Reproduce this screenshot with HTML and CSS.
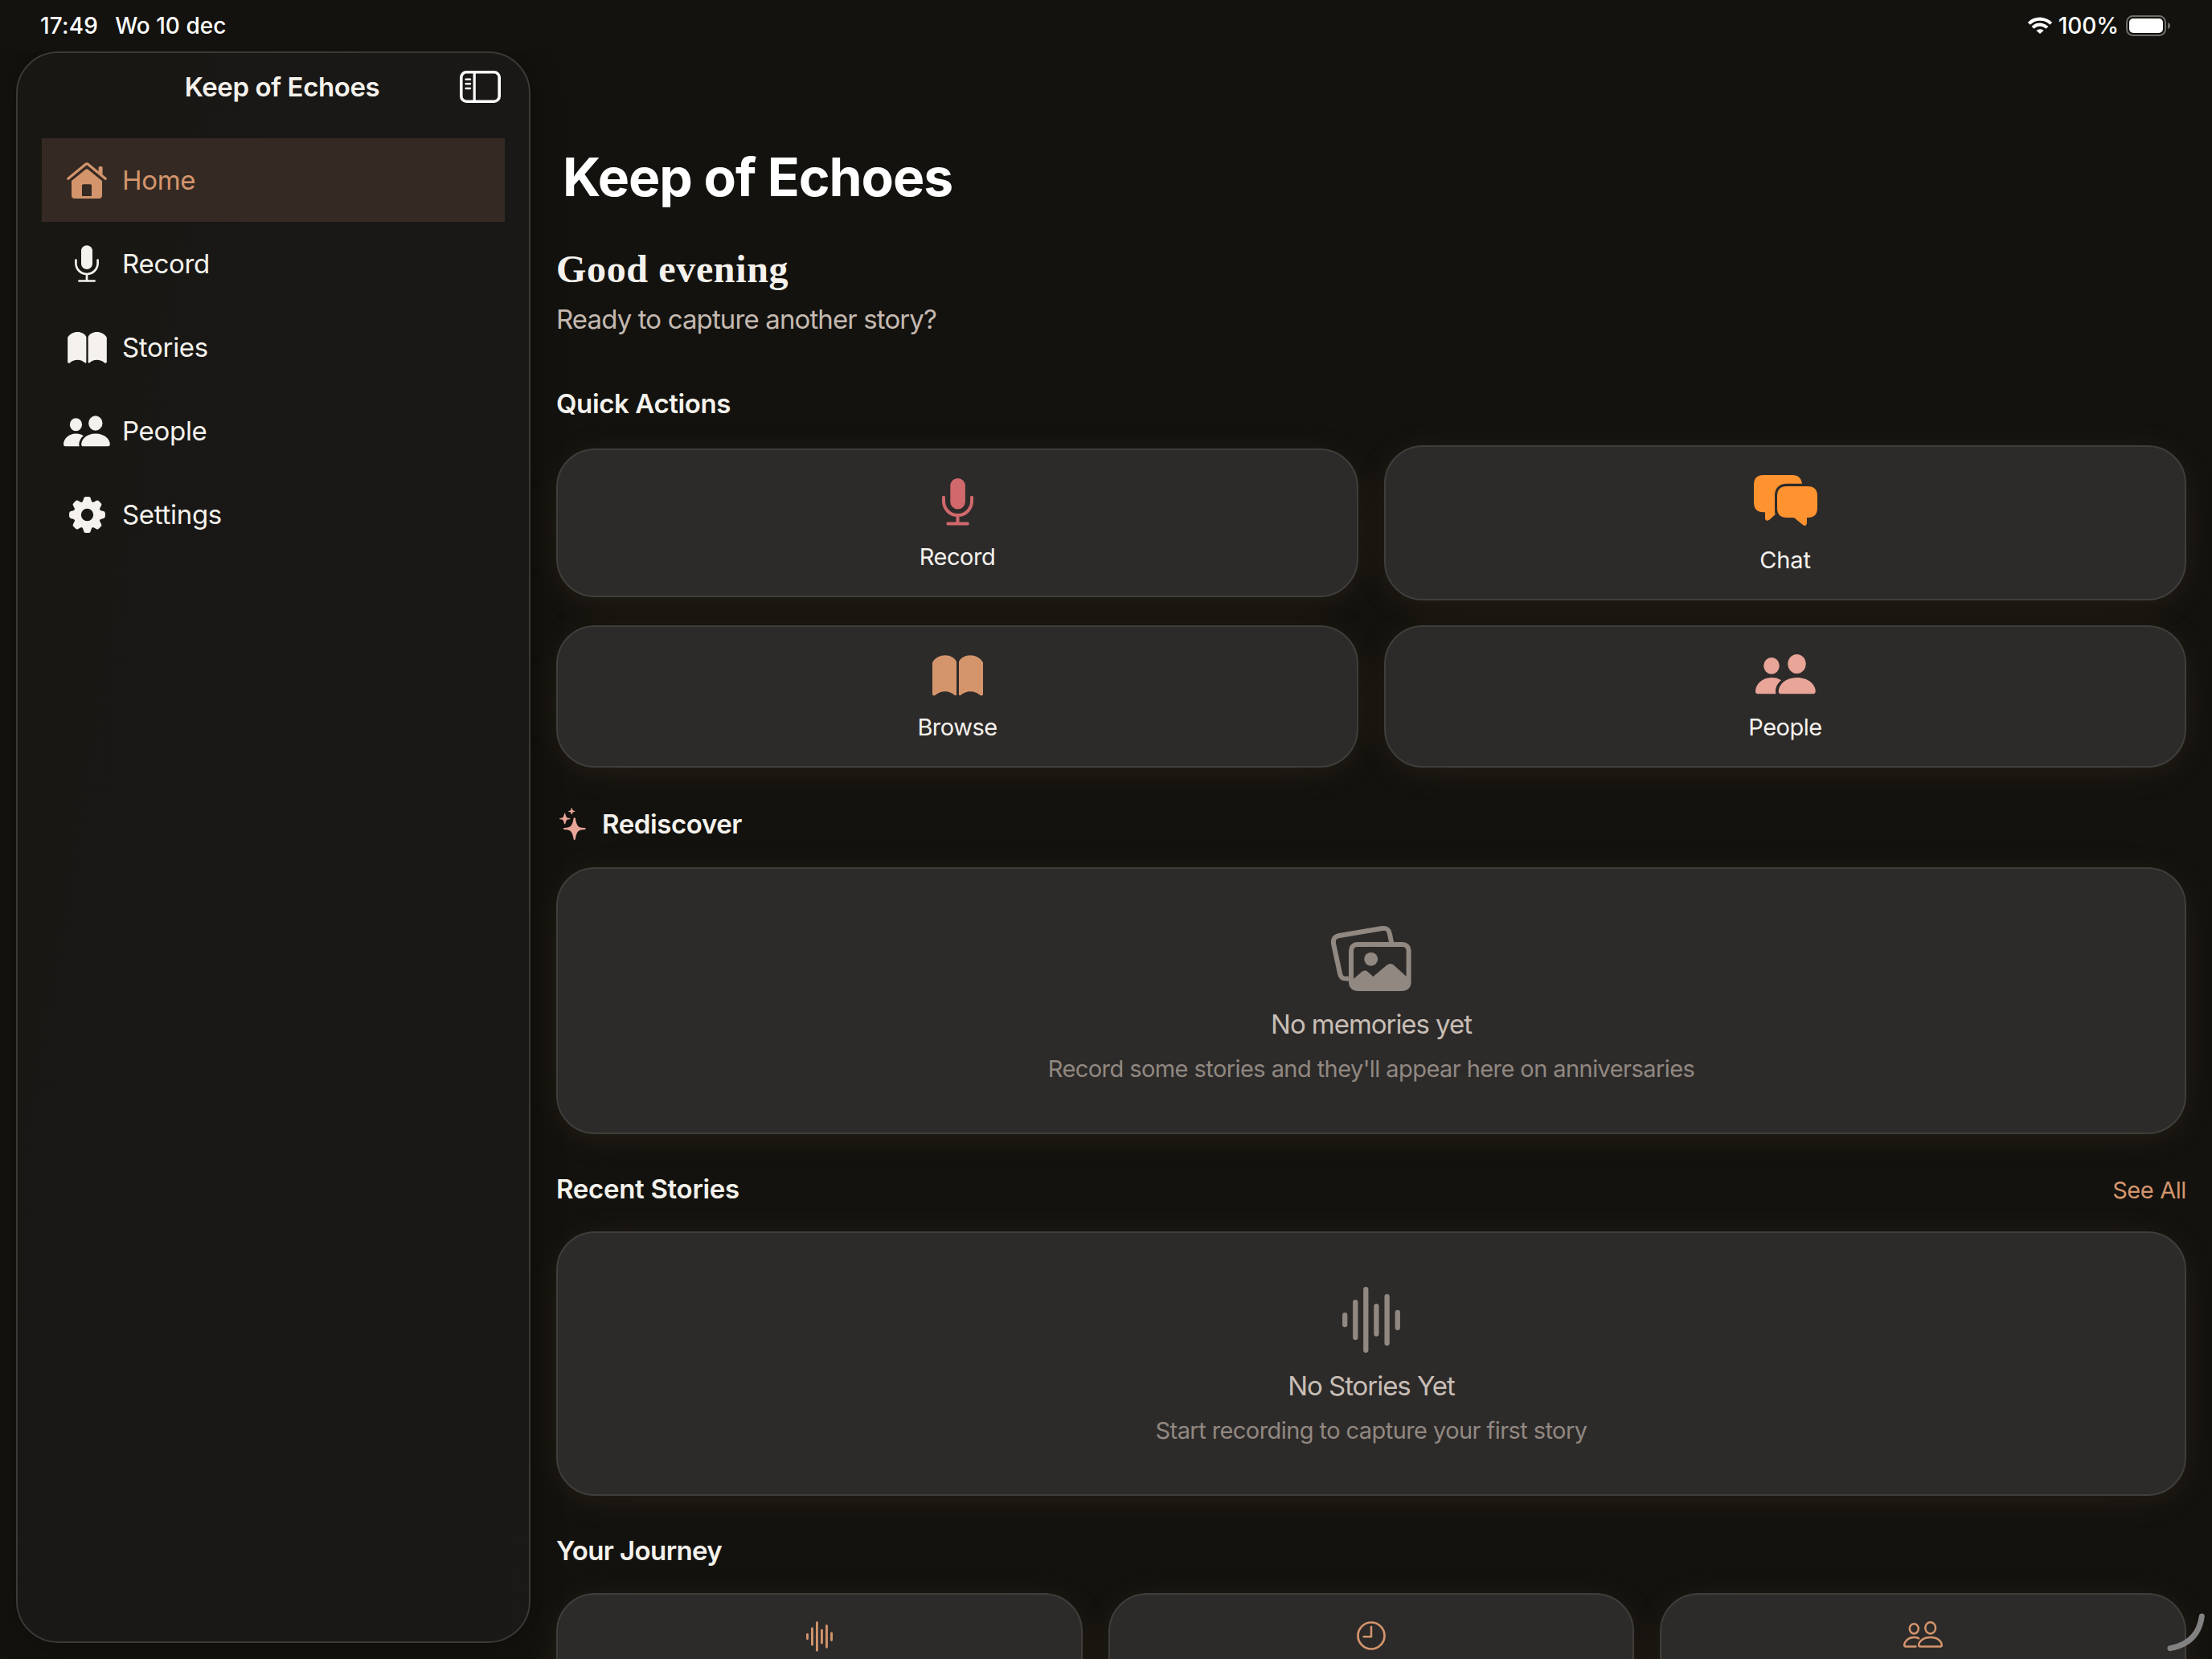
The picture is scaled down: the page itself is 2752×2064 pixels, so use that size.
FILE: index.html
```html
<!DOCTYPE html>
<html lang="nl">
<head>
<meta charset="utf-8">
<title>Keep of Echoes</title>
<link rel="stylesheet" href="styles.css">
</head>
<body>
<svg class="defs" aria-hidden="true">
  <symbol id="book" viewBox="0 0 63 50.5">
    <path id="page" d="M0 9C3 3 10 0 16 0C22 0 28 3 30 8V49q-.3 1.8-2.4.5C24 46.5 20 45 16 45C11 45 7 46.5 3.5 49.8Q.5 51 0 48.5Z"/>
    <use href="#page" transform="translate(63) scale(-1 1)"/>
  </symbol>
  <symbol id="people" viewBox="0 0 75 50">
    <ellipse cx="20" cy="14.3" rx="9.8" ry="10.4"/>
    <ellipse cx="51.5" cy="12" rx="11.2" ry="12"/>
    <path d="M31.7 49.3q-3 0-3-3.4C29 38 37 29 51.7 29C66 29 74.7 38 74.7 46q0 3.3-3 3.3Z"/>
    <path d="M3 49.3Q0 49.3 0 46C0 38 8 29 20 29C25 29 29 30.2 32 32.3C27.5 36 25 41 25 46q0 2 .6 3.3Z"/>
  </symbol>
  <symbol id="wave" viewBox="0 0 72 82">
    <path d="M3.2 35.2V47.1M16.3 19.2V63.1M29.3 3.2V78.8M42.4 24.2V58.5M55.6 12.2V70.1M68.8 31.9V50.8" fill="none" stroke="currentColor" stroke-width="6.3" stroke-linecap="round"/>
  </symbol>
</svg>

<header class="status">
  <div class="status-left"><span class="time">17:49</span><span class="date">Wo 10 dec</span></div>
  <div class="status-right">
    <svg class="wifi" viewBox="0 0 30 20" fill="none" stroke="currentColor" stroke-width="4.2">
      <path d="M1.3 7.4A19.2 19.2 0 0 1 28.7 7.4M6.1 12.4A12.4 12.4 0 0 1 23.9 12.4"/>
      <path d="M15 20L10.4 15.9Q15 12.4 19.6 15.9Z" fill="currentColor" stroke="none"/>
    </svg>
    <span class="percent">100%</span>
    <svg class="battery" viewBox="0 0 56 26">
      <rect x="1" y="1" width="48" height="24" rx="7.5" fill="none" stroke="#6e6d6a" stroke-width="2"/>
      <rect x="4" y="4" width="42" height="18" rx="5" fill="#fff"/>
      <path d="M52 9Q55 10 55 13Q55 16 52 17Z" fill="#6e6d6a"/>
    </svg>
  </div>
</header>

<div class="app">
  <aside class="sidebar">
    <div class="sidebar-head">
      <div class="sidebar-title">Keep of Echoes</div>
      <svg class="toggle" viewBox="0 0 51 40" fill="none" stroke="currentColor">
        <rect x="1.8" y="1.8" width="47.4" height="36.4" rx="6.5" stroke-width="3.6"/>
        <path d="M18.2 2V38" stroke-width="3.2"/>
        <path d="M7.6 10.7H13M7.6 16.3H13M7.6 22H13" stroke-width="2.4" stroke-linecap="round"/>
      </svg>
    </div>
    <nav class="nav">
      <a class="nav-item active"><span class="nav-icon">
        <svg width="50" height="45" viewBox="0 0 50 45" fill="currentColor">
          <path d="M1.8 20.3L23.4 2.4Q25 1.2 26.6 2.4L48.2 20.3" fill="none" stroke="currentColor" stroke-width="3.2" stroke-linecap="round"/>
          <path d="M39.6 11.5V6.6Q39.6 5 41.2 5H43Q44.6 5 44.6 6.6V15.6Z"/>
          <path fill-rule="evenodd" d="M6 23L23.5 8.8Q25 7.6 26.5 8.8L44 23V41Q44 45 40 45H10Q6 45 6 41ZM20.5 27.3Q19 27.3 19 28.8V42H31V28.8Q31 27.3 29.5 27.3Z"/>
        </svg></span>Home</a>
      <a class="nav-item"><span class="nav-icon">
        <svg width="30" height="46" viewBox="0 0 30 46" fill="none" stroke="currentColor" stroke-width="2.7" stroke-linecap="round">
          <rect x="8" y=".3" width="14" height="29.8" rx="7" fill="currentColor" stroke="none"/>
          <path d="M1.4 18.5V22.5A13.6 13.5 0 0 0 28.6 22.5V18.5M15 36V44M5.4 44.5H24.6"/>
        </svg></span>Record</a>
      <a class="nav-item"><span class="nav-icon"><svg width="49" height="39" fill="currentColor"><use href="#book"/></svg></span>Stories</a>
      <a class="nav-item"><span class="nav-icon"><svg width="58" height="39" fill="currentColor"><use href="#people"/></svg></span>People</a>
      <a class="nav-item"><span class="nav-icon">
        <svg width="45" height="45" viewBox="-22.5 -22.5 45 45" fill="currentColor">
          <circle r="12.3" fill="none" stroke="currentColor" stroke-width="9.2"/>
          <path id="tooth" d="M-6.6-15Q-5-17-4.4-20.2Q-4-22.4-1.8-22.4H1.8Q4-22.4 4.4-20.2Q5-17 6.6-15Z"/>
          <use href="#tooth" transform="rotate(45)"/><use href="#tooth" transform="rotate(90)"/>
          <use href="#tooth" transform="rotate(135)"/><use href="#tooth" transform="rotate(180)"/>
          <use href="#tooth" transform="rotate(225)"/><use href="#tooth" transform="rotate(270)"/>
          <use href="#tooth" transform="rotate(315)"/>
        </svg></span>Settings</a>
    </nav>
  </aside>

  <main class="main">
    <h1 class="title">Keep of Echoes</h1>
    <div class="greeting">Good evening</div>
    <p class="subtitle">Ready to capture another story?</p>

    <h2 class="section quick-title">Quick Actions</h2>
    <div class="quick">
      <div class="card action record">
        <svg width="39" height="59" viewBox="0 0 39 59" fill="none" stroke="currentColor" stroke-width="4" stroke-linecap="round">
          <rect x="10.3" y="0" width="18.6" height="38.5" rx="9.3" fill="currentColor" stroke="none"/>
          <path d="M2 23.7V28.6A17.5 17.5 0 0 0 37 28.6V23.7M19.5 47V55M7.4 56.4H31.8"/>
        </svg>
        <span class="label">Record</span>
      </div>
      <div class="card action chat">
        <svg width="79" height="64" viewBox="0 0 79 64" fill="currentColor">
          <path d="M12 0H48C55 0 59 4 60 10.7H41C31 10.7 26 17 26 25V43Q26 47 26.8 49L19.5 55.5Q14.6 58.8 14 54V46.3H12C4 46.3 0 42 0 34V12C0 4 4 0 12 0Z"/>
          <path d="M41 14H67C75 14 79 18 79 26V41C79 49 75 53 67 53H66V60Q65 65 61 62L50 53H41C33 53 29 49 29 41V26C29 18 33 14 41 14Z"/>
        </svg>
        <span class="label">Chat</span>
      </div>
      <div class="card action browse">
        <svg width="63" height="51" fill="currentColor"><use href="#book"/></svg>
        <span class="label">Browse</span>
      </div>
      <div class="card action persons">
        <svg width="75" height="50" fill="currentColor"><use href="#people"/></svg>
        <span class="label">People</span>
      </div>
    </div>

    <h2 class="section rediscover">
      <svg width="33" height="40" viewBox="0 0 33 40" fill="currentColor">
        <path d="M18.7 12Q19.6 12 19.9 13.5Q21.3 22.8 25.2 24.2Q27.5 24.9 31.4 25Q33 25.3 33 26Q33 26.7 31.4 27Q26 27.2 23.6 29Q21 31.5 19.9 38.5Q19.6 40 18.7 40Q17.8 40 17.5 38.5Q16.4 31.5 13.8 29Q11.4 27.2 6 27Q4.6 26.7 4.6 26Q4.6 25.3 6 25Q11.4 24.8 13.8 23Q16.4 20.5 17.5 13.5Q17.8 12 18.7 12Z"/>
        <path d="M6.7 6.8Q7.3 6.8 7.5 8Q8.2 12 10.5 12.7L13 13.1Q14 13.6 13 14.2L10.5 14.6Q8.2 15.3 7.5 19.4Q6.7 21.5 5.9 19.4Q5.2 15.3 2.9 14.6L.5 14.2Q-.5 13.6 .5 13.1L2.9 12.7Q5.2 12 5.9 8Q6.1 6.8 6.7 6.8Z"/>
        <path d="M15.3 0Q16 0 16.2 2.2Q16.5 3.5 18.2 3.7Q21 4.3 18.2 4.9Q16.5 5.1 16.2 6.4Q15.3 10.4 14.4 6.4Q14.1 5.1 12.4 4.9Q9.6 4.3 12.4 3.7Q14.1 3.5 14.4 2.2Q14.6 0 15.3 0Z"/>
      </svg>Rediscover</h2>
    <div class="card empty memories">
      <svg width="100" height="82" viewBox="0 0 100 82" fill="none" stroke="currentColor" stroke-width="6">
        <path d="M22 66.3C15 67.5 12.5 66 11.2 61L3.2 24C2 17 4 14.2 10.5 13L62 4.2C69.5 3 72 5 73 11L75.2 22"/>
        <rect x="25" y="24" width="71.6" height="55" rx="7.5"/>
        <circle cx="49.7" cy="42.3" r="8.4" fill="currentColor" stroke="none"/>
        <path d="M26 68.5L38.6 57.8Q42 55 45.4 57.8L52.4 64L69 50Q73.8 46.2 78.4 50L96 66V74Q95 79 89 79H33Q26 79 26 73Z" fill="currentColor" stroke="none"/>
      </svg>
      <div class="empty-title">No memories yet</div>
      <div class="empty-text">Record some stories and they'll appear here on anniversaries</div>
    </div>

    <div class="section-row">
      <h2 class="section">Recent Stories</h2>
      <a class="see-all">See All</a>
    </div>
    <div class="card empty stories">
      <svg width="72" height="82"><use href="#wave"/></svg>
      <div class="empty-title">No Stories Yet</div>
      <div class="empty-text">Start recording to capture your first story</div>
    </div>

    <h2 class="section journey-title">Your Journey</h2>
    <div class="journey">
      <div class="card stat"><svg width="33" height="38"><use href="#wave"/></svg></div>
      <div class="card stat"><svg width="36" height="36" viewBox="0 0 36 36" fill="none" stroke="currentColor" stroke-width="2.7">
        <circle cx="18" cy="18" r="16.5"/><path d="M18 7V19.2H8.6" stroke-width="2.5" stroke-linecap="round" stroke-linejoin="round"/></svg></div>
      <div class="card stat"><svg width="49" height="33" viewBox="0 0 49 33" fill="none" stroke="currentColor" stroke-width="2.5" stroke-linecap="round">
        <ellipse cx="13.3" cy="9.3" rx="5.5" ry="6.1"/><ellipse cx="33.7" cy="8.3" rx="6.4" ry="7.1"/>
        <path d="M20.8 31.5Q19.2 31.5 19.2 29.6C19.5 25 25 20 33.7 20S47.6 25 47.8 29.6Q47.8 31.5 46.2 31.5Z"/>
        <path d="M15.5 31.5H2.8Q1.2 31.5 1.2 29.6C1.5 25 6 20 13.3 20Q16.8 20 19.2 21.3"/></svg></div>
    </div>
  </main>
</div>
<svg class="corner" viewBox="0 0 48 48"><path d="M43.3 4Q38.6 37.5 4 43.6" fill="none" stroke="#828282" stroke-width="7" stroke-linecap="round"/></svg>
</body>
</html>
```
FILE: styles.css
```css
* { box-sizing: border-box; }
html, body { margin: 0; }
body {
  width: 2752px;
  height: 2064px;
  overflow: hidden;
  position: relative;
  background: #13120e;
  color: #f5f2ed;
  font-family: Inter, "Liberation Sans", sans-serif;
  font-size: 33px;
}
svg { display: block; flex: none; overflow: visible; }
.defs { position: absolute; width: 0; height: 0; }

/* status bar */
.status {
  display: flex;
  justify-content: space-between;
  height: 64px;
  padding: 0 51px 0 50px;
  line-height: 65px;
  color: #fff;
  font-size: 28px;
  font-weight: 500;
}
.status-left { display: flex; gap: 21px; }
.time { letter-spacing: .2px; }
.date { letter-spacing: 0; }
.status-right { display: flex; align-items: center; }
.wifi { width: 30px; height: 20px; }
.percent { margin: 0 9px 0 8px; letter-spacing: -.1px; }
.battery { width: 56px; height: 26px; }

.app { display: flex; height: 2000px; overflow: hidden; }

/* sidebar */
.sidebar {
  width: 640px;
  height: 1980px;
  margin-left: 20px;
  flex: none;
  padding: 0 30px;
  border: 2px solid #3a3934;
  border-radius: 52px;
  background: linear-gradient(100deg, #181712, #191816 35%, #1a1917);
  box-shadow: 0 0 40px rgba(0, 0, 0, .3);
}
.sidebar-head {
  display: flex;
  align-items: center;
  height: 84px;
  margin-bottom: 22px;
  padding: 0 5px 0 78px;
}
.sidebar-title { flex: 1; text-align: center; font-weight: 600; letter-spacing: -.4px; white-space: nowrap; }
.toggle { width: 51px; height: 40px; color: #fff; }
.nav-item {
  display: flex;
  align-items: center;
  gap: 12px;
  height: 104px;
  padding-left: 24px;
  letter-spacing: -.3px;
}
.nav-item.active { background: #352a23; color: #d4956c; }
.nav-icon { display: flex; justify-content: center; width: 64px; letter-spacing: 0; }

/* main column */
.main { flex: 1; margin: 0 32px; }
.title {
  margin: 116px 0 0;
  padding-left: 8px;
  font-size: 66px;
  line-height: 80px;
  font-weight: 700;
  letter-spacing: -1.05px;
  color: #fff;
}
.greeting {
  margin-top: 47px;
  font: 700 48px/56px "Liberation Serif", serif;
  letter-spacing: .65px;
}
.subtitle { margin: 14px 0 0; line-height: 40px; letter-spacing: -.88px; color: #c4b9b1; }
.section { margin: 0; font-size: 33px; line-height: 40px; font-weight: 600; letter-spacing: -.4px; }
.quick-title { margin: 65px 0 32px; }
.card {
  border: 2px solid #403e3b;
  border-radius: 48px;
  background: #2d2b2a;
  box-shadow: 0 6px 44px rgba(212, 149, 108, .09);
}
.quick {
  display: grid;
  grid-template-columns: 1fr 1fr;
  grid-template-rows: 193px 177px;
  gap: 31px 32px;
  align-items: center;
}
.action { display: flex; flex-direction: column; align-items: center; }
.label { font-size: 29px; line-height: 36px; letter-spacing: -.5px; color: #f5f2ed; }
.record { height: 185px; padding-top: 35px; gap: 21px; color: #d1696c; }
.chat { height: 193px; padding-top: 35px; gap: 24px; color: #ff9330; }
.chat .label { letter-spacing: -.1px; }
.browse { height: 177px; padding-top: 35px; gap: 21px; color: #d4956c; }
.persons { height: 177px; padding-top: 34px; gap: 23px; color: #e8a598; }

.rediscover { display: flex; align-items: center; margin: 50px 0 34px; padding-left: 4px; gap: 20px; }
.rediscover svg { color: #e8a598; }
.empty { display: flex; flex-direction: column; align-items: center; color: #918881; }
.empty-title { line-height: 40px; letter-spacing: -1.05px; color: #c8beb6; }
.empty-text { margin-top: 18px; font-size: 29px; line-height: 36px; letter-spacing: -.57px; }
.memories { height: 332px; padding-top: 70px; }
.memories .empty-title { margin-top: 21px; }
.stories { height: 329px; padding-top: 67px; }
.stories .empty-title { margin-top: 21px; }
.section-row { display: flex; justify-content: space-between; align-items: center; margin: 48px 0 33px; }
.section-row .section { letter-spacing: -.3px; }
.see-all { padding-top: 3px; font-size: 29px; line-height: 36px; letter-spacing: -.4px; color: #d4956c; }
.journey-title { margin: 48px 0 33px; letter-spacing: -.6px; }
.journey { display: grid; grid-template-columns: repeat(3, 1fr); gap: 32px; }
.stat { display: flex; justify-content: center; height: 220px; padding-top: 33px; color: #d4956c; }

/* resize handle over the page corner */
.corner { position: absolute; left: 2696px; top: 2007px; width: 48px; height: 48px; }
```
